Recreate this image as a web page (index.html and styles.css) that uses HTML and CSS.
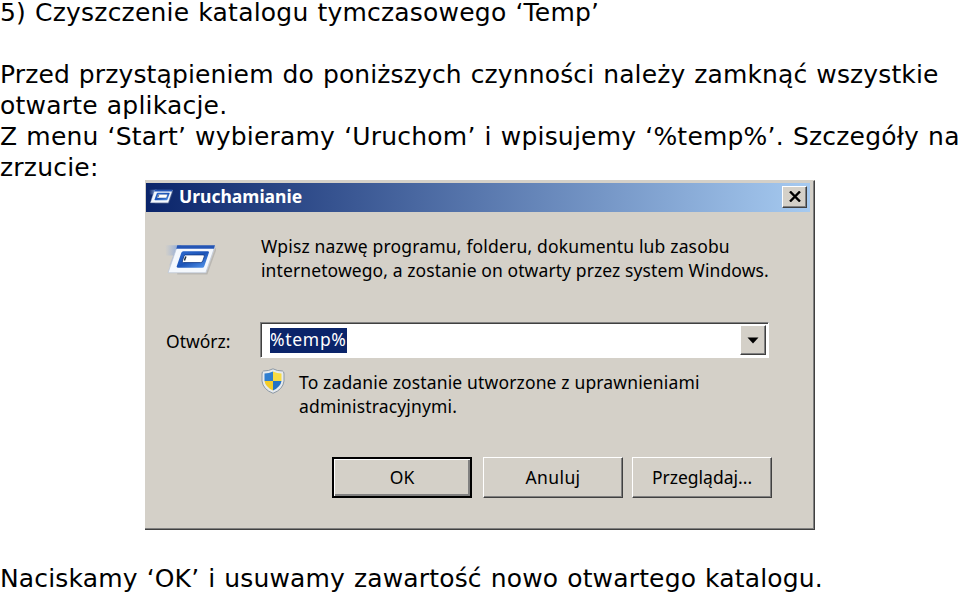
FILE: index.html
```html
<!DOCTYPE html>
<html lang="pl">
<head>
<meta charset="utf-8">
<title>Czyszczenie katalogu tymczasowego</title>
<link rel="stylesheet" href="styles.css">
</head>
<body>
<main class="page">
  <h1 class="line heading">5) Czyszczenie katalogu tymczasowego ‘Temp’</h1>
  <p class="line warning">Przed przystąpieniem do poniższych czynności należy zamknąć wszystkie</p>
  <p class="line">otwarte aplikacje.</p>
  <p class="line">Z menu ‘Start’ wybieramy ‘Uruchom’ i wpisujemy ‘%temp%’. Szczegóły na</p>
  <p class="line">zrzucie:</p>
  <section class="dialog">
    <header class="titlebar">
      <svg class="title-icon" viewBox="0 0 50 30"><use href="#run"/></svg>
      <span class="title">Uruchamianie</span>
      <span class="close"><svg width="12" height="11" viewBox="0 0 12 11"><path d="M1 0.5L11 10.5M11 0.5L1 10.5" stroke="#000" stroke-width="2.4"/></svg></span>
    </header>
    <div class="intro">
      <svg class="run-icon" viewBox="0 0 50 30">
        <defs>
          <linearGradient id="trail"><stop offset="0" stop-color="#9cb4dc" stop-opacity="0"/><stop offset="1" stop-color="#7c9fd8"/></linearGradient>
          <linearGradient id="blue" x2="1" y2="1"><stop offset="0" stop-color="#2f6cd0"/><stop offset=".5" stop-color="#1c54b8"/><stop offset="1" stop-color="#5a9cf0"/></linearGradient>
          <g id="run">
            <path d="M0 1H16L8 21H4L8 11H1Z" fill="url(#trail)"/>
            <path d="M12 29L41 29L50 4" fill="none" stroke="#8a8a8a" stroke-opacity=".35" stroke-width="1.5"/>
            <path d="M12 2H49L40 28H3Z" fill="#f4f8fd" stroke="#b8c4d8" stroke-width=".7"/>
            <path d="M12 1H49L48 4.500H11Z" fill="#2455b5"/>
            <path d="M18 7H42Q43.500 7 43 8.500L38.500 21.500Q38 23 36.500 23H13Q11 23 11.500 21.500L16 8.500Q16.500 7 18 7Z" fill="url(#blue)"/>
            <path d="M20 10.500H37.500Q39 10.500 38.500 12L37 16.500Q36.500 18 35 18H18Q16.500 18 17 16.500L18.500 12Q19 10.500 20 10.500Z" fill="#fff" stroke="#123a86" stroke-width=".8"/>
            <path d="M20.500 12l-1.500 4" stroke="#234" stroke-width="1.500"/>
          </g>
        </defs>
        <use href="#run"/>
      </svg>
      <div class="copy"><div class="prompt-first">Wpisz nazwę programu, folderu, dokumentu lub zasobu</div><div class="prompt-second">internetowego, a zostanie on otwarty przez system Windows.</div></div>
    </div>
    <div class="open-row">
      <label class="label">Otwórz:</label>
      <div class="combo"><span class="selection">%temp%</span><span class="drop"><svg width="12" height="7" viewBox="0 0 12 7"><path d="M0.5 0.5H11.5L6 6.5Z"/></svg></span></div>
    </div>
    <div class="notice">
      <svg class="shield" viewBox="0 0 24 26">
        <path d="M12 .8Q16 3 21.500 3Q23 3.500 23 6V13Q22 21.500 12 25.300Q2 21.500 1 13V6Q1 3.500 2.500 3Q8 3 12 .8Z" fill="#e6eaee" stroke="#8c98a4"/>
        <path d="M12 3.500V13H3.500V5.500Q8 5.500 12 3.500Z" fill="#2f7ed0"/>
        <path d="M12 3.500Q16 5.500 20.500 5.500V13H12Z" fill="#f8dc44"/>
        <path d="M3.500 13H12V22.500Q4.500 19 3.500 13Z" fill="#f3cc28"/>
        <path d="M12 13H20.500Q19.500 19 12 22.500Z" fill="#2372c4"/>
      </svg>
      <div class="copy"><div>To zadanie zostanie utworzone z uprawnieniami</div><div>administracyjnymi.</div></div>
    </div>
    <footer class="buttons">
      <span class="btn default">OK</span>
      <span class="btn cancel">Anuluj</span>
      <span class="btn browse">Przeglądaj...</span>
    </footer>
  </section>
  <p class="line last">Naciskamy ‘OK’ i usuwamy zawartość nowo otwartego katalogu.</p>
</main>
</body>
</html>
```
FILE: styles.css
```css
* { box-sizing: border-box; }
body { margin: 0; background: #fff; color: #000; overflow: hidden; }
.page { width: 960px; height: 594px; }
.line { margin: 0; height: 31px; font: 25px/31px "DejaVu Sans", sans-serif; letter-spacing: .21px; word-spacing: .85px; white-space: nowrap; }
.heading { height: 28px; margin: 0 0 31px; line-height: 25px; }
.warning { letter-spacing: .13px; }
.dialog { width: 670px; height: 350px; margin: -3px 0 0 145px; padding: 2px 4px 0 1px; background: #d4d0c8; border-top: 1px solid #d4d0c8; border-right: 1px solid #404040; border-bottom: 1px solid #404040; box-shadow: inset -1px -1px #808080; font: 17.5px/24px "Noto Sans", sans-serif; white-space: nowrap; }
.titlebar { display: flex; align-items: center; height: 29px; padding: 0 3px; background: linear-gradient(90deg, #0a246a, #a6caf0); color: #fff; }
.title-icon { width: 24px; height: 15px; margin-top: -2px; }
.title { margin: -3px 0 0 6px; font-weight: 700; }
.close { display: grid; place-items: center; width: 25px; height: 22px; margin: -2px 0 0 auto; background: #d4d0c8; border: 1px solid; border-color: #fff #404040 #404040 #fff; box-shadow: inset -1px -1px #808080; }
.intro { display: flex; margin-top: 22px; padding-left: 19px; }
.run-icon { width: 51px; height: 31px; margin-top: 10px; }
.intro .copy { margin-left: 45px; }
.prompt-first { letter-spacing: .17px; }
.prompt-second { letter-spacing: .1px; }
.open-row { display: flex; margin: 40px 0 0 20px; }
.label { width: 94px; padding-top: 7px; }
.combo { display: flex; width: 509px; height: 36px; padding: 1px; background: #fff; border: 1px solid; border-color: #808080 #fff #fff #808080; box-shadow: inset 1px 1px #404040; }
.selection { width: 77px; height: 25px; margin: 4px 0 0 8px; line-height: 22px; letter-spacing: .7px; background: #0a246a; color: #fff; }
.drop { display: grid; place-items: center; width: 26px; height: 30px; margin: 1px 1px 0 auto; background: #d4d0c8; border: 1px solid; border-color: #fff #404040 #404040 #fff; box-shadow: inset -1px -1px #808080; }
.notice { display: flex; margin: 12px 0 0 115px; }
.shield { width: 24px; height: 26px; margin-top: -2px; }
.notice .copy { margin-left: 14px; letter-spacing: .15px; }
.buttons { display: flex; margin: 39px 0 0 186px; }
.btn { display: grid; place-items: center; width: 140px; height: 41px; padding-bottom: 2px; margin-right: 9px; border: 1px solid; border-color: #fff #404040 #404040 #fff; box-shadow: inset -1px -1px #808080; }
.default { margin-right: 11px; border: 2px solid #000; box-shadow: inset 1px 1px #fff, inset -2px -2px #808080; }
.cancel { letter-spacing: .4px; }
.last { margin-top: 33px; letter-spacing: .16px; }
```
